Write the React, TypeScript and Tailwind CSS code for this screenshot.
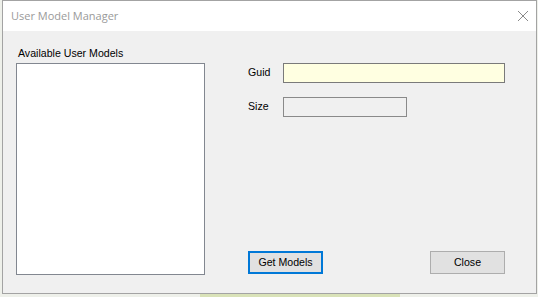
import * as React from "react";

function WinButton({ label, focused }: { label: string; focused?: boolean }) {
  return (
    <button
      type="button"
      className={
        focused
          ? "flex h-[23px] w-[75px] items-center justify-center border-2 border-[#0078d7] bg-[#e1e1e1] text-[10.6px] text-black"
          : "flex h-[23px] w-[75px] items-center justify-center border border-[#adadad] bg-[#e1e1e1] text-[10.6px] text-black"
      }
    >
      {label}
    </button>
  );
}

export default function App() {
  return (
    <div
      className="flex h-[297px] w-[538px] flex-col overflow-hidden bg-[#eef0ea]"
      style={{ fontFamily: '"Liberation Sans", Arial, sans-serif' }}
    >
      <div className="ml-[2px] flex h-[294px] w-[535px] flex-col border border-[#a3a3a3] bg-[#f0f0f0]">
        {/* title bar */}
        <div className="flex h-[30px] items-center justify-between bg-white pl-[8px] pr-[7px]">
          <span
            className="text-[11px] text-[#9a9a9a]"
            style={{ fontFamily: '"Open Sans", "Noto Sans", sans-serif' }}
          >
            User Model Manager
          </span>
          <svg width="12" height="12" viewBox="0 0 12 12" aria-hidden>
            <path d="M1 1 L11 11 M11 1 L1 11" stroke="#8a8a8a" strokeWidth="1" fill="none" />
          </svg>
        </div>

        {/* body */}
        <div className="flex flex-1">
          <div className="ml-[13px] flex flex-col pt-[16px]">
            <span className="h-[13px] pl-[2px] text-[10.6px] leading-[13px] text-black">Available User Models</span>
            <div className="mt-[3px] h-[212px] w-[189px] border border-[#828790] bg-white" />
          </div>

          <div className="ml-[43px] flex w-[257px] flex-col pt-[32px] pb-[19px]">
            <div className="flex h-[20px] items-center">
              <span className="w-[35px] text-[10.6px] text-black">Guid</span>
              <div className="h-[20px] w-[223px] border border-[#7a7a7a] bg-[#ffffe1]" />
            </div>
            <div className="mt-[14px] flex h-[20px] items-center">
              <span className="w-[35px] text-[10.6px] text-black">Size</span>
              <div className="h-[20px] w-[124px] border border-[#8a8a8a] bg-[#f0f0f0]" />
            </div>
            <div className="mt-auto flex justify-between">
              <WinButton label="Get Models" focused />
              <WinButton label="Close" />
            </div>
          </div>
        </div>
      </div>
      <div className="ml-[200px] h-[3px] w-[200px] bg-[#d9e2b8]" />
    </div>
  );
}
